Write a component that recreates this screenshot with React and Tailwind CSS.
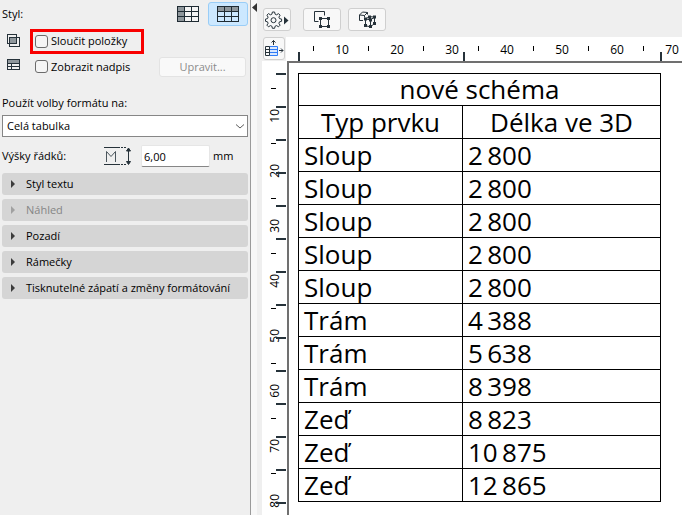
import { useState } from 'react'

const sections = [
  { label: 'Styl textu' },
  { label: 'Náhled', disabled: true },
  { label: 'Pozadí' },
  { label: 'Rámečky' },
  { label: 'Tisknutelné zápatí a změny formátování' },
]

const rows = [
  ['Sloup', '2\u2009800'],
  ['Sloup', '2\u2009800'],
  ['Sloup', '2\u2009800'],
  ['Sloup', '2\u2009800'],
  ['Sloup', '2\u2009800'],
  ['Trám', '4\u2009388'],
  ['Trám', '5\u2009638'],
  ['Trám', '8\u2009398'],
  ['Zeď', '8\u2009823'],
  ['Zeď', '10\u2009875'],
  ['Zeď', '12\u2009865'],
]

const toolButton =
  'flex h-[23px] items-center justify-center rounded-[3px] border border-[#cfcfcf] bg-[#f8f8f8]'

// table grid, the shaded part is either the first column or the header row
function GridIcon({ shade, fill }) {
  return (
    <svg width="22" height="16" viewBox="0 0 22 16" shapeRendering="crispEdges" aria-hidden="true">
      <rect width="22" height="16" fill={fill} />
      {shade === 'column' ? (
        <rect width="7" height="16" fill="#8f979c" />
      ) : (
        <rect width="22" height="5" fill="#8f979c" />
      )}
      <path
        d="M.5 .5h21v15h-21zM0 5.5h22M0 10.5h22M7.5 0v16M14.5 0v16"
        fill="none"
        stroke="#1f2b33"
      />
    </svg>
  )
}

function MergeIcon() {
  return (
    <svg width="13" height="13" viewBox="0 0 13 13" shapeRendering="crispEdges" aria-hidden="true">
      <rect x="3" y="3" width="7" height="7" fill="#8f979c" />
      <path d="M.5 .5h9v9h-9zM2.500 3.500h10v9h-10z" fill="none" stroke="#26323a" />
    </svg>
  )
}

function HeaderIcon() {
  return (
    <svg width="13" height="11" viewBox="0 0 13 11" shapeRendering="crispEdges" aria-hidden="true">
      <rect width="13" height="4" fill="#8f979c" />
      <path d="M.5 .5h12v10h-12zM0 4.500h13M0 7.500h13M4.500 4v7" fill="none" stroke="#26323a" />
    </svg>
  )
}

function RowHeightIcon() {
  return (
    <svg width="28" height="19" viewBox="0 0 28 19" fill="none" stroke="#26323a" aria-hidden="true">
      <path d="M0 .5h14M0 17.500h14" />
      <path d="M14 .5h8M14 17.500h8" strokeDasharray="2 1" />
      <path d="M2.500 15V4.500l4.500 5 4.500-5V15" stroke="#4a555c" />
      <path d="M24.500 2v15M22.500 4l2-3 2 3zM22.500 14.500l2 3 2-3z" fill="#26323a" />
    </svg>
  )
}

function GearIcon() {
  return (
    <svg width="24" height="18" viewBox="0 0 24 18" fill="none" stroke="#26323a" aria-hidden="true">
      <path d="M7.400 1h2.200l.5 2.200 1.500.6 1.900-1.200 1.600 1.600-1.200 1.900.6 1.500 2.100.5v2.200l-2.100.5-.6 1.500 1.200 1.900-1.600 1.600-1.900-1.200-1.500.6-.5 2.100H7.400l-.5-2.100-1.500-.6-1.900 1.200-1.600-1.600 1.200-1.900-.6-1.500-2-.5V8.100l2-.5.6-1.500-1.200-1.900 1.600-1.600 1.900 1.200 1.500-.6z" />
      <circle cx="8.500" cy="9.200" r="2.500" />
      <path d="M19 5.500v8l4.500-4z" fill="#26323a" stroke="none" />
    </svg>
  )
}

function SelectFrameIcon() {
  return (
    <svg width="18" height="18" viewBox="0 0 18 18" fill="none" stroke="#26323a" aria-hidden="true">
      <path d="M5.500 10.500h-4v-10h10v4" />
      <path d="M7.500 7.500h8v8h-8z" />
      <path d="M6 6h3v3H6zM14 6h3v3h-3zM6 14h3v3H6zM14 14h3v3h-3z" fill="#26323a" stroke="none" />
    </svg>
  )
}

function SelectCubeIcon() {
  return (
    <svg width="19" height="18" viewBox="0 0 19 18" fill="none" stroke="#26323a" aria-hidden="true">
      <path d="M5 9.500H1.500v-5.500l3-3 5 .5v2M1.500 4l5 .5 3-3M6.500 4.500v2" />
      <path d="M7.500 8l5 .8v7l-5-1zM7.500 8l4-2.500 5 .7-4 2.600M16.500 6.200v6.300l-4 3.300" />
      <path
        d="M6 6.500h3v3H6zM11 7.500h3v3h-3zM10 4.500h3v3h-3zM15 4.500h3v3h-3zM15 11h3v3h-3zM6 13h3v3H6zM11 14h3v3h-3z"
        fill="#26323a"
        stroke="none"
      />
    </svg>
  )
}

function TableFlowIcon() {
  return (
    <svg
      width="19"
      height="17"
      viewBox="0 0 19 17"
      fill="none"
      className="shrink-0"
      aria-hidden="true"
    >
      <path d="M4 6h8v10H4z" fill="#d9e8ff" />
      <path d="M4.500 6.500h8v9h-8M4 9.500h9M4 12.500h9" stroke="#2f7cf6" />
      <path d="M4.500 6.500h-4v9h4zM0 9.500h5M0 12.500h5" stroke="#26323a" />
      <path d="M8.500 5V.5M6.500 2.500l2-2 2 2M14 10.500h4M16 8.500l2 2-2 2" stroke="#26323a" />
    </svg>
  )
}

function SettingsPanel() {
  const [merge, setMerge] = useState(false)
  const [title, setTitle] = useState(false)

  return (
    <aside className="flex w-[251px] shrink-0 flex-col border-r border-[#9a9a9a] px-0.5 pt-0.5 text-[11px]">
      <div className="flex h-6 items-center">
        <span className="flex-1">Styl:</span>
        <button type="button" aria-label="Sloupce" className="flex h-6 w-10 items-center justify-center">
          <GridIcon shade="column" fill="#f4f4f4" />
        </button>
        <button
          type="button"
          aria-label="Tabulka"
          aria-pressed="true"
          className="flex h-6 w-10 items-center justify-center rounded-[3px] border border-[#99cdf7] bg-[#cce8ff]"
        >
          <GridIcon shade="row" fill="#cce8ff" />
        </button>
      </div>

      <div className="mt-[3px] flex h-6 items-center">
        <span className="flex w-7 pb-0.5 pl-[5px]">
          <MergeIcon />
        </span>
        <label className="flex h-[25px] w-[114px] items-center gap-[3px] border-[3px] border-[#f80000] pl-0.5">
          <input
            type="checkbox"
            checked={merge}
            onChange={(e) => setMerge(e.target.checked)}
            className="size-[13px] appearance-none rounded-[3px] border border-[#6b6b6b] bg-[#f5f5f5] checked:bg-[#0067c0]"
          />
          Sloučit položky
        </label>
      </div>

      <div className="mt-[3px] flex h-[21px] items-center">
        <span className="flex w-7 pb-1 pl-[5px]">
          <HeaderIcon />
        </span>
        <label className="flex flex-1 items-center gap-[3px] pl-[5px]">
          <input
            type="checkbox"
            checked={title}
            onChange={(e) => setTitle(e.target.checked)}
            className="size-[13px] appearance-none rounded-[3px] border border-[#6b6b6b] bg-[#f5f5f5] checked:bg-[#0067c0]"
          />
          Zobrazit nadpis
        </label>
        <button
          type="button"
          disabled
          className="mr-0.5 h-5 w-[87px] rounded-[3px] border border-[#e3e3e3] bg-[#f9f9f9] leading-4 text-[#8c8c8c]"
        >
          Upravit...
        </button>
      </div>

      <label htmlFor="scope" className="mt-4 leading-5">
        Použít volby formátu na:
      </label>
      <div className="mt-0.5 grid">
        <select
          id="scope"
          className="col-start-1 row-start-1 h-[22px] appearance-none border border-[#868686] bg-white pl-1"
        >
          <option>Celá tabulka</option>
          <option>Záhlaví</option>
        </select>
        <svg
          width="8"
          height="5"
          viewBox="0 0 8 5"
          className="pointer-events-none col-start-1 row-start-1 mr-1 self-center justify-self-end"
          fill="none"
          stroke="#5c5c5c"
          aria-hidden="true"
        >
          <path d="M0 .5l4 3.500 4-3.500" />
        </svg>
      </div>

      <div className="mt-2 flex h-[22px] items-center">
        <label htmlFor="row-height" className="w-[102px]">
          Výšky řádků:
        </label>
        <RowHeightIcon />
        <input
          id="row-height"
          type="text"
          defaultValue="6,00"
          className="ml-[9px] h-[22px] w-[69px] rounded-xs border border-[#e6e6e6] border-b-[#868686] bg-white px-0.5"
        />
        <span className="ml-[3px]">mm</span>
      </div>

      <div className="mt-1.5 flex flex-col gap-1">
        {sections.map(({ label, disabled }) => (
          <button
            key={label}
            type="button"
            disabled={disabled}
            className="flex h-[22px] items-center rounded-[3px] bg-[#d5d5d5] pl-[9px] text-left whitespace-nowrap text-black disabled:text-[#858585]"
          >
            <svg
              width="4"
              height="8"
              viewBox="0 0 4 8"
              className={disabled ? 'mr-[11px] text-[#a0a0a0]' : 'mr-[11px] text-[#3c3c3c]'}
              aria-hidden="true"
            >
              <path d="M0 0v8l4-4z" fill="currentColor" />
            </svg>
            {label}
          </button>
        ))}
      </div>
    </aside>
  )
}

function Toolbar() {
  return (
    <div className="flex h-[37px] pt-2 pl-px">
      <button type="button" aria-label="Nastavení" className={`${toolButton} w-[28px]`}>
        <GearIcon />
      </button>
      <button type="button" aria-label="Vybrat" className={`${toolButton} ml-3 w-[38px]`}>
        <SelectFrameIcon />
      </button>
      <button type="button" aria-label="Vybrat ve 3D" className={`${toolButton} ml-[7px] w-[38px]`}>
        <SelectCubeIcon />
      </button>
    </div>
  )
}

function TopRuler() {
  return (
    <div className="relative h-6 flex-1 overflow-hidden bg-white">
      <div className="flex h-full pl-[27px]">
        {[10, 20, 30, 40, 50, 60, 70].map((n) => (
          <div key={n} className="flex w-[55px] shrink-0">
            <span className="mt-[9px] h-[5px] w-px bg-black" />
            <span className="mt-1 flex-1 pl-0.5 text-center leading-[18px]">{n}</span>
          </div>
        ))}
      </div>
      {/* column boundaries */}
      <div className="absolute bottom-0 left-3 flex">
        <span className="h-[9px] w-0.5 bg-[#26323a]" />
        <span className="ml-[163px] h-[9px] w-0.5 bg-[#26323a]" />
        <span className="ml-[195px] h-[9px] w-0.5 bg-[#26323a]" />
      </div>
    </div>
  )
}

function SideRuler() {
  return (
    <div className="relative w-[25px] shrink-0 bg-white">
      <div className="flex flex-col pt-[27px]">
        {[10, 20, 30, 40, 50, 60, 70, 80].map((n) => (
          <div key={n} className="flex h-[55px] flex-col pl-[9px]">
            <span className="h-px w-[5px] bg-black" />
            <span className="mt-5 w-2 rotate-180 text-center leading-2 [writing-mode:vertical-rl]">
              {n}
            </span>
          </div>
        ))}
      </div>
      {/* row boundaries */}
      <div className="absolute top-3 right-px flex flex-col gap-[31px]">
        {Array.from({ length: 14 }, (_, i) => (
          <span key={i} className="h-0.5 w-2.5 bg-[#26323a]" />
        ))}
      </div>
    </div>
  )
}

function ScheduleTable() {
  return (
    <table className="w-full table-fixed border-collapse text-[26px] leading-8 text-black">
      <colgroup>
        <col className="w-[164px]" />
        <col />
      </colgroup>
      <thead>
        <tr>
          <th colSpan={2} className="border border-black p-0 leading-[31px] font-normal">
            nové schéma
          </th>
        </tr>
        <tr>
          <th className="border border-black p-0 font-normal">Typ prvku</th>
          <th className="border border-black p-0 font-normal">Délka ve 3D</th>
        </tr>
      </thead>
      <tbody>
        {rows.map(([type, length], i) => (
          <tr key={i}>
            <td className="border border-black py-0 pr-0 pl-[5px]">{type}</td>
            <td className="border border-black py-0 pr-0 pl-[5px]">{length}</td>
          </tr>
        ))}
      </tbody>
    </table>
  )
}

export default function App() {
  return (
    <div className="flex min-h-screen bg-[#efefef] font-['Open_Sans','Noto_Sans',sans-serif] text-[12px] leading-4 text-black">
      <SettingsPanel />
      <button
        type="button"
        aria-label="Sbalit panel"
        className="flex w-1.5 shrink-0 items-start justify-end bg-[#f7f7f7] pt-[3px]"
      >
        <svg width="5" height="9" viewBox="0 0 5 9" aria-hidden="true">
          <path d="M5 0v9L0 4.500z" fill="#333" />
        </svg>
      </button>
      <main className="flex min-w-0 flex-1 flex-col pl-[5px]">
        <Toolbar />
        <div className="flex">
          <div className="w-6 pl-px">
            <button type="button" aria-label="Směr tabulky" className={`${toolButton} w-[22px]`}>
              <TableFlowIcon />
            </button>
          </div>
          <TopRuler />
        </div>
        <div className="flex flex-1">
          <SideRuler />
          <div className="flex-1 border-t-2 border-l-2 border-[#707070] bg-white pt-2.5 pr-[21px] pl-[9px]">
            <ScheduleTable />
          </div>
        </div>
      </main>
    </div>
  )
}
